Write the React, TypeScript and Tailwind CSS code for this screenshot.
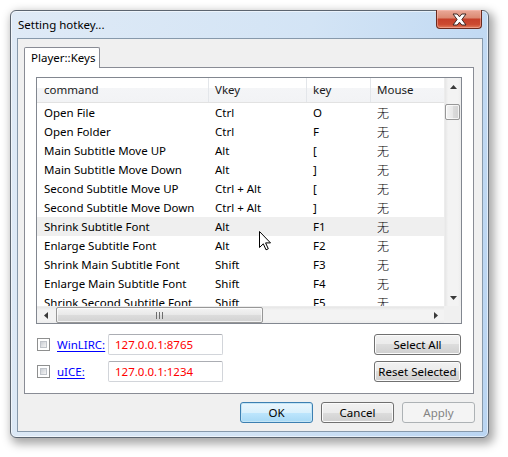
import React from "react";

const rows: [string, string, string, string][] = [
  ["Open File", "Ctrl", "O", "无"],
  ["Open Folder", "Ctrl", "F", "无"],
  ["Main Subtitle Move UP", "Alt", "[", "无"],
  ["Main Subtitle Move Down", "Alt", "]", "无"],
  ["Second Subtitle Move UP", "Ctrl + Alt", "[", "无"],
  ["Second Subtitle Move Down", "Ctrl + Alt", "]", "无"],
  ["Shrink Subtitle Font", "Alt", "F1", "无"],
  ["Enlarge Subtitle Font", "Alt", "F2", "无"],
  ["Shrink Main Subtitle Font", "Shift", "F3", "无"],
  ["Enlarge Main Subtitle Font", "Shift", "F4", "无"],
  ["Shrink Second Subtitle Font", "Shift", "F5", "无"],
];

function Tri({ dir }: { dir: "up" | "down" | "left" | "right" }) {
  const pts =
    dir === "up"
      ? "0,4 7,4 3.5,0"
      : dir === "down"
      ? "0,0 7,0 3.5,4"
      : dir === "left"
      ? "4,0 4,7 0,3.5"
      : "0,0 0,7 4,3.5";
  const w = dir === "up" || dir === "down" ? 7 : 4;
  const h = dir === "up" || dir === "down" ? 4 : 7;
  return (
    <svg width={w} height={h} viewBox={`0 0 ${w} ${h}`}>
      <polygon points={pts} fill="#3a3a3a" />
    </svg>
  );
}

function Checkbox() {
  return (
    <div className="w-[13px] h-[13px] border border-[#8e8f8f] bg-white p-[2px]">
      <div className="w-full h-full bg-[linear-gradient(135deg,#cbcfd5,#f4f4f4)] border border-[#c0c4ca]" />
    </div>
  );
}

function Btn({ label, kind = "normal", w = "w-[73px]" }: { label: string; kind?: "normal" | "default" | "disabled"; w?: string }) {
  const cls =
    kind === "default"
      ? "border-[#3c7fb1] bg-[linear-gradient(#eaf6fd_0%,#d9f0fc_50%,#bee6fd_50%,#a7d9f5_100%)] text-black shadow-[inset_0_0_0_1px_#c4e5f6]"
      : kind === "disabled"
      ? "border-[#adb2b5] bg-[#f4f4f4] text-[#838383]"
      : "border-[#707070] bg-[linear-gradient(#f2f2f2_0%,#ebebeb_50%,#dddddd_50%,#cfcfcf_100%)] text-black shadow-[inset_0_0_0_1px_#fbfbfb]";
  return (
    <div className={`${w} h-[21px] border rounded-[3px] flex items-center justify-center leading-none ${cls}`}>
      {label}
    </div>
  );
}

export default function App() {
  return (
    <div className="w-[508px] h-[457px] bg-white overflow-hidden pt-[10px] pl-[10px] relative font-['Noto_Sans','Noto_Sans_CJK_SC',sans-serif] text-[11.5px] text-black">
      {/* window */}
      <div className="relative w-[479px] h-[428px] rounded-[6px] border border-[#5c6570] bg-[linear-gradient(100deg,#dfeaf6_0%,#d3e4f5_55%,#bad5f2_100%)] shadow-[3px_4px_10px_2px_rgba(0,0,0,0.35),inset_0_0_0_1px_rgba(255,255,255,0.55)] flex flex-col">
        {/* title */}
        <div className="h-[27px] pl-[7px] flex items-center pt-[1px]">
          <span className="text-[11.5px]">Setting hotkey...</span>
        </div>
        {/* close */}
        <div className="absolute top-[-1px] right-[6px] w-[46px] h-[19px] rounded-b-[4px] border border-[#6b2a1e] border-t-0 bg-[linear-gradient(#eaa999_0%,#dc8a74_42%,#c6402a_52%,#cc4a30_80%,#e27c5a_100%)] shadow-[inset_0_0_0_1px_rgba(255,200,190,0.45)] flex items-center justify-center">
          <svg width="15" height="13" viewBox="0 0 15 13">
            <path
              d="M1 1 L5.2 1 L7.5 3.8 L9.8 1 L14 1 L9.9 6.5 L14 12 L9.8 12 L7.5 9.2 L5.2 12 L1 12 L5.1 6.5 Z"
              fill="#ffffff"
              stroke="#3f2622"
              strokeWidth="1"
              strokeLinejoin="round"
            />
          </svg>
        </div>
        {/* client */}
        <div className="ml-[6px] mr-[5px] mb-[5px] flex-1 border border-[#8799ab] bg-[#f0f0f0] flex flex-col pl-[6px] pt-[8px]">
          {/* tab header */}
          <div className="h-[20px] flex items-end relative z-10">
            <div className="w-[76px] h-[21px] -mb-[1px] border border-b-0 border-[#898c95] rounded-t-[2px] bg-white pl-[6px] flex items-center">
              Player::Keys
            </div>
          </div>
          {/* tab panel */}
          <div className="w-[450px] h-[327px] border border-[#898c95] bg-white px-[11px] pt-[9px] flex flex-col">
            {/* list */}
            <div className="w-[426px] h-[247px] border border-[#828790] bg-white grid grid-cols-[407px_17px] grid-rows-[228px_17px]">
              <div className="overflow-hidden relative">
                <div className="h-[25px] grid grid-cols-[172px_98px_64px_1fr] border-b border-[#e2e2e2] bg-[linear-gradient(#ffffff_0%,#ffffff_42%,#f4f5f7_43%,#f2f3f5_100%)] text-[#1b1b1b]">
                  <div className="pl-[7px] flex items-center border-r border-[#e3e6ea]">command</div>
                  <div className="pl-[6px] flex items-center border-r border-[#e3e6ea]">Vkey</div>
                  <div className="pl-[6px] flex items-center border-r border-[#e3e6ea]">key</div>
                  <div className="pl-[6px] flex items-center">Mouse</div>
                </div>
                {rows.map((r, i) => (
                  <div
                    key={i}
                    className={`h-[19px] grid grid-cols-[172px_98px_64px_1fr] items-center whitespace-nowrap ${i === 6 ? "bg-[#efefef]" : ""}`}
                  >
                    <div className="pl-[7px] overflow-hidden">{r[0]}</div>
                    <div className="pl-[6px]">{r[1]}</div>
                    <div className="pl-[6px]">{r[2]}</div>
                    <div className="pl-[6px] font-['Noto_Sans_CJK_SC',sans-serif] text-[12px] font-light">{r[3]}</div>
                  </div>
                ))}
              </div>
              {/* vertical scrollbar */}
              <div className="bg-[linear-gradient(90deg,#e6e6e6_0%,#f3f3f3_20%,#f3f3f3_80%,#ececec_100%)] border-l border-[#ececec] flex flex-col">
                <div className="h-[17px] flex items-center justify-center">
                  <Tri dir="up" />
                </div>
                <div className="h-[9px]" />
                <div className="h-[16px] w-[15px] ml-[0px] rounded-[2px] border border-[#979797] bg-[linear-gradient(90deg,#f4f4f4_0%,#e8e8e8_50%,#dcdcdc_51%,#d2d2d2_100%)] shadow-[inset_0_0_0_1px_rgba(255,255,255,0.7)]" />
                <div className="flex-1" />
                <div className="h-[17px] flex items-center justify-center">
                  <Tri dir="down" />
                </div>
              </div>
              {/* horizontal scrollbar */}
              <div className="bg-[linear-gradient(#e6e6e6_0%,#f3f3f3_20%,#f3f3f3_80%,#ececec_100%)] border-t border-[#ececec] flex">
                <div className="w-[17px] flex items-center justify-center">
                  <Tri dir="left" />
                </div>
                <div className="w-[207px] ml-[2px] my-[0px] rounded-[2px] border border-[#979797] bg-[linear-gradient(#f4f4f4_0%,#e8e8e8_50%,#dcdcdc_51%,#d2d2d2_100%)] shadow-[inset_0_0_0_1px_rgba(255,255,255,0.7)] flex items-center justify-center">
                  <svg width="7" height="7" viewBox="0 0 7 7">
                    <rect x="0" y="0" width="1" height="7" fill="#6e6e6e" />
                    <rect x="3" y="0" width="1" height="7" fill="#6e6e6e" />
                    <rect x="6" y="0" width="1" height="7" fill="#6e6e6e" />
                  </svg>
                </div>
                <div className="flex-1" />
                <div className="w-[17px] flex items-center justify-center">
                  <Tri dir="right" />
                </div>
              </div>
              <div className="bg-[#f0f0f0]" />
            </div>
            {/* bottom controls */}
            <div className="mt-[10px] flex justify-between pl-[1px] pr-[1px]">
              <div className="flex flex-col gap-[6px]">
                {[
                  ["WinLIRC:", "127.0.0.1:8765"],
                  ["uICE:", "127.0.0.1:1234"],
                ].map(([l, v]) => (
                  <div key={l} className="h-[21px] flex items-center">
                    <Checkbox />
                    <div className="w-[51px] ml-[7px]">
                      <span className="text-[#0000ff] underline underline-offset-[2px]">{l}</span>
                    </div>
                    <div className="w-[115px] h-[21px] rounded-[2px] border border-[#d2d5da] border-t-[#abadb3] bg-white pl-[6px] flex items-center text-[#ff0000]">
                      {v}
                    </div>
                  </div>
                ))}
              </div>
              <div className="flex flex-col gap-[6px]">
                <Btn label="Select All" w="w-[87px]" />
                <Btn label="Reset Selected" w="w-[87px]" />
              </div>
            </div>
          </div>
          {/* dialog buttons */}
          <div className="mt-[8px] flex justify-end gap-[8px] pr-[7px]">
            <Btn label="OK" kind="default" />
            <Btn label="Cancel" />
            <Btn label="Apply" kind="disabled" />
          </div>
        </div>
      </div>
      {/* mouse cursor */}
      <svg className="absolute left-[259px] top-[231px]" width="13" height="20" viewBox="0 0 13 20">
        <path d="M0.5 0.5 L0.5 16.5 L4.3 12.8 L7 18.8 L9.3 17.8 L6.6 11.9 L11.5 11.9 Z" fill="#ffffff" stroke="#000000" strokeWidth="1" strokeLinejoin="miter" />
      </svg>
    </div>
  );
}
